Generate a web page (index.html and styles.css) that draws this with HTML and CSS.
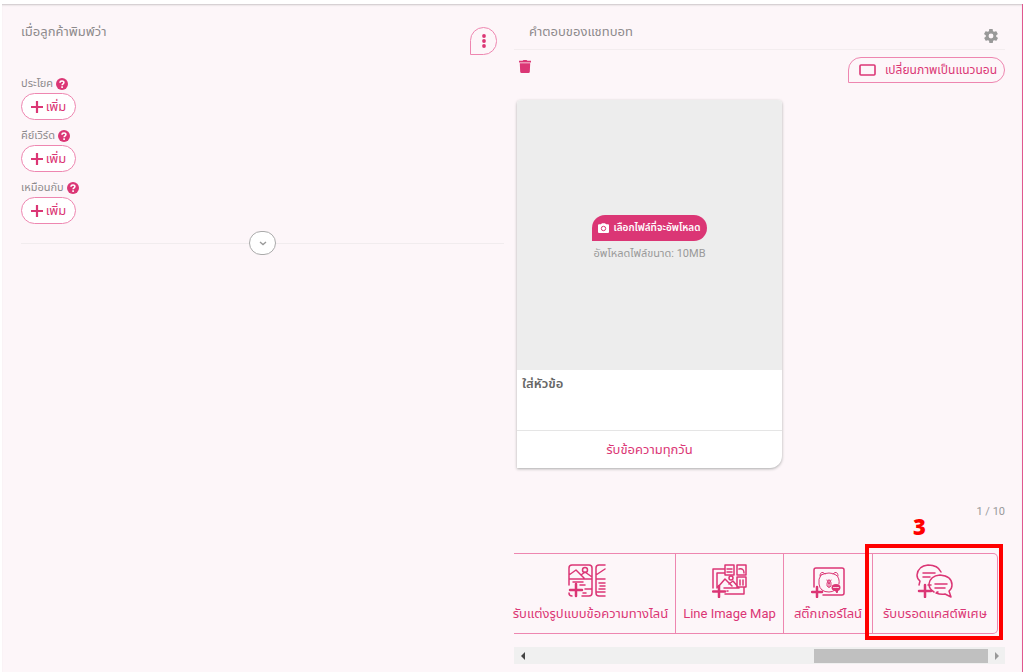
FILE: index.html
```html
<!DOCTYPE html>
<html lang="th">
<head>
<meta charset="utf-8">
<meta name="viewport" content="width=device-width, initial-scale=1">
<title>แชทบอท</title>
<link rel="stylesheet" href="styles.css">
</head>
<body>
<svg class="sprite" aria-hidden="true">
  <symbol id="help" viewBox="0 0 12 12"><circle cx="6" cy="6" r="6" fill="currentColor"/><path d="M4 4.700C4.100 2.500 8 2.500 7.900 4.600 7.900 5.900 6.100 5.700 6.100 7.300M6.100 8.300V9.900" fill="none" stroke="#fff" stroke-width="1.600"/></symbol>
  <symbol id="plus" viewBox="0 0 12 12"><path d="M6 .5V11.500M.5 6H11.500" stroke="currentColor" stroke-width="2.200" stroke-linecap="round"/></symbol>
</svg>
<main class="workspace">
  <section class="rules">
    <header class="rules-head">
      <h2 class="panel-title">เมื่อลูกค้าพิมพ์ว่า</h2>
      <button class="more" aria-label="เมนู"><svg width="4" height="14" viewBox="0 0 4 14" fill="currentColor"><circle cx="2" cy="2" r="1.900"/><circle cx="2" cy="7" r="1.900"/><circle cx="2" cy="12" r="1.900"/></svg></button>
    </header>
    <div class="rule">
      <p class="rule-label">ประโยค <svg class="help"><use href="#help"/></svg></p>
      <button class="add"><svg class="plus"><use href="#plus"/></svg>เพิ่ม</button>
    </div>
    <div class="rule">
      <p class="rule-label">คีย์เวิร์ด <svg class="help"><use href="#help"/></svg></p>
      <button class="add"><svg class="plus"><use href="#plus"/></svg>เพิ่ม</button>
    </div>
    <div class="rule">
      <p class="rule-label">เหมือนกับ <svg class="help"><use href="#help"/></svg></p>
      <button class="add"><svg class="plus"><use href="#plus"/></svg>เพิ่ม</button>
    </div>
    <div class="expander"><button class="expand" aria-label="ขยาย"><svg width="8" height="5" viewBox="0 0 8 5"><path d="M1 1L4 3.600L7 1" fill="none" stroke="currentColor" stroke-width="1.300"/></svg></button></div>
  </section>

  <section class="answers">
    <header class="answers-head">
      <h2 class="panel-title">คำตอบของแชทบอท</h2>
      <button class="plain gear" aria-label="ตั้งค่า"><svg width="14" height="14" viewBox="2 2 20 20" fill="currentColor" fill-rule="evenodd"><path d="M19.400 13c.1-.7.1-1.300 0-2l2.100-1.600c.2-.2.2-.4.1-.6l-2-3.500c-.1-.2-.4-.3-.6-.2l-2.500 1c-.5-.4-1.100-.7-1.700-1l-.4-2.600c0-.3-.2-.5-.5-.5h-4c-.3 0-.5.2-.5.500l-.4 2.600c-.6.300-1.100.6-1.700 1l-2.500-1c-.2-.1-.5 0-.6.200l-2 3.500c-.1.200-.1.500.1.600L4.600 11c-.1.700-.1 1.300 0 2l-2.100 1.600c-.2.200-.2.400-.1.600l2 3.500c.1.200.4.300.6.200l2.500-1c.5.400 1.100.7 1.700 1l.4 2.600c0 .3.200.5.500.5h4c.3 0 .5-.2.500-.5l.4-2.600c.6-.3 1.100-.6 1.700-1l2.500 1c.2.100.5 0 .6-.2l2-3.500c.1-.2.100-.5-.1-.6zM12 15.500a3.500 3.500 0 1 1 0-7 3.500 3.500 0 0 1 0 7z"/></svg></button>
    </header>
    <div class="tools">
      <button class="plain trash" aria-label="ลบ"><svg width="12" height="13" viewBox="0 0 12 13" fill="currentColor"><path d="M0 .8H3.500L4.500 0H7.500L8.500 .8H12V2.400H0zM.8 3.300H11.200L10.800 11.700Q10.700 13 9.500 13H2.500Q1.300 13 1.200 11.700z"/></svg></button>
      <button class="orient"><svg width="17" height="12" viewBox="0 0 17 12"><rect x="1" y="1" width="15" height="10" rx="1" fill="none" stroke="currentColor" stroke-width="1.600"/></svg>เปลี่ยนภาพเป็นแนวนอน</button>
    </div>
    <article class="card">
      <div class="picture">
        <button class="upload"><svg width="11" height="10" viewBox="0 0 11 10"><path d="M1 1.300H3L4 .2H7L8 1.300H10Q11 1.300 11 2.300V9Q11 10 10 10H1Q0 10 0 9V2.300Q0 1.300 1 1.300z" fill="currentColor"/><circle cx="5.500" cy="5.500" r="2.200" fill="none" stroke="#db3675"/></svg>เลือกไฟล์ที่จะอัพโหลด</button>
        <p class="limit">อัพโหลดไฟล์ขนาด: 10MB</p>
      </div>
      <h3 class="card-title">ใส่หัวข้อ</h3>
      <button class="card-action">รับข้อความทุกวัน</button>
    </article>
    <p class="count">1 / 10</p>
    <div class="strip">
      <button class="tile tile-rich">
        <svg width="38" height="34" viewBox="0 0 38 34" class="line"><path d="M1 21V4Q1 1 4 1H21Q24 1 24 4V29Q24 32 21 32H14M1 15H24M1 11L8 6L16 14M13 11L17 8L24 13M5 18H15M12 21H17M17 25H24M15 29H18M1 29Q1 32 4 32M37 1H31Q28 1 28 4V29Q28 32 31 32H37M28 11L37 5M28 15H37M31 19H37M32 22H37M31 25H37M28 28H37"/><circle cx="17" cy="6" r="2.500"/><path class="heavy" d="M8 20V32M2 26H14"/></svg>
        รับแต่งรูปแบบข้อความทางไลน์
      </button>
      <button class="tile">
        <svg width="36" height="34" viewBox="0 0 36 34" class="line"><path d="M12 5H1V24M12 9H5V24M13 1H22V11H13zM25 1H34V11H25zM25 13H34V23H25zM15 5H20M15 8H20M27 5Q32 4 32 9M28 16V21M31 16V21M32 23V30H13M6 23L13 15L20 22M17 20L21 17L27 24H12"/><circle cx="19" cy="14" r="2"/><path d="M15 27H16"/><path class="heavy" d="M7 22V33M1 27.500H13"/></svg>
        Line Image Map
      </button>
      <button class="tile">
        <svg width="34" height="32" viewBox="0 0 34 32" class="line"><path d="M3 21V4Q3 2 5 2H31Q33 2 33 4V27Q33 29 31 29H12"/><g stroke-width="1"><path d="M10 9Q7 13 8 18Q9 26 18 26Q22 26 24 24M28 18Q29 12 25 9Q22 7 18 7Q14 7 10 9M9 10Q9 6 12 6.500L14 8M27 10Q27 6 24 6.500L22 8M18 14Q15 17 16 20Q18 23 20 20Q21 16 18 14zM16 14L18 18L20 14M18 17V21"/></g><ellipse cx="25" cy="21.500" rx="4.500" ry="3.500" fill="currentColor" stroke="none"/><path d="M24 24L26 27L27 24" fill="currentColor" stroke-width="1"/><path d="M22.500 21.500H27.500" stroke="#fff5f9" stroke-width=".8" stroke-dasharray="1 .6"/><path class="heavy" d="M6 21V31M1 26H11"/></svg>
        สติ๊กเกอร์ไลน์
      </button>
      <button class="tile">
        <svg width="38" height="34" viewBox="0 0 38 34" class="line"><path d="M3 21L4 17Q1 15 1 11Q2 2 12 1Q22 1 25 8M15 21H12M7 9H19M7 13H14M18 28Q13 25 13 20Q14 12 24 11Q36 12 36 21Q36 25 33 27L35 33L29 30Q25 31 20 29M19 20H31M19 24H29M21 28H22"/><path class="heavy" d="M9 21V33M3 27H15"/></svg>
        รับบรอดแคสต์พิเศษ
      </button>
      <div class="highlight"><span class="step">3</span></div>
    </div>
    <div class="scroller">
      <button class="plain arrow" aria-label="เลื่อนซ้าย"><svg width="4" height="8" viewBox="0 0 4 8"><path d="M4 0V8L0 4z" fill="#444"/></svg></button>
      <div class="track"><div class="thumb"></div></div>
      <button class="plain arrow" aria-label="เลื่อนขวา"><svg width="4" height="8" viewBox="0 0 4 8"><path d="M0 0V8L4 4z" fill="#999"/></svg></button>
    </div>
  </section>
</main>
</body>
</html>
```
FILE: styles.css
```css
* { box-sizing: border-box; }
body {
  margin: 0;
  padding: 4px 1px 0 2px;
  background: #fff;
  color: #8d8a8c;
  font: 12px/18px Roboto, "Noto Sans Thai", sans-serif;
}
h2, h3, p { margin: 0; }
button { font: inherit; color: #db3675; background: none; border: 1px solid #ee86b0; padding: 0; white-space: nowrap; }
button svg { flex: none; }
.sprite { display: none; }
.plain { border: 0; display: flex; }

.workspace {
  display: grid;
  grid-template-columns: minmax(0, 483fr) minmax(0, 491fr);
  gap: 10px;
  min-height: calc(100vh - 4px);
  padding: 0 17px 0 19px;
  background: #fdf6f9;
  border-right: 1px solid #e0588f;
  box-shadow: inset 0 2px 2px -1px #c9c4c6;
}
.panel-title { font-size: 13px; line-height: 18px; font-weight: 400; }

.rules-head { display: flex; justify-content: space-between; align-items: flex-start; height: 71px; padding: 19px 7px 0 0; }
.more { display: flex; align-items: center; justify-content: center; width: 27px; height: 28px; margin-top: 4px; border-radius: 14px 14px 14px 0; }
.rule { height: 52px; }
.rule-label { display: flex; align-items: center; gap: 3px; height: 18px; font-size: 11px; }
.help { width: 12px; height: 12px; color: #db3675; }
.plus { width: 12px; height: 12px; }
.add { display: flex; align-items: center; justify-content: center; gap: 3px; width: 55px; height: 27px; border-radius: 14px; background: #fff; font-size: 13px; }
.expander { display: flex; align-items: center; height: 24px; }
.expander::before, .expander::after { content: ""; flex: 1; height: 1px; background: #f1ecee; }
.expand { display: flex; align-items: center; justify-content: center; width: 27px; height: 24px; border-color: #aaa; border-radius: 12px; background: #fff; color: #999; }

.answers-head { display: flex; justify-content: space-between; height: 46px; padding: 19px 7px 0 15px; border-bottom: 1px solid #f3edef; }
.gear { align-self: flex-start; margin-top: 6px; color: #999; }
.tools { display: flex; justify-content: space-between; align-items: flex-start; height: 50px; padding: 7px 0 0 5px; }
.trash { margin-top: 3px; }
.orient { display: flex; align-items: center; justify-content: space-between; width: 157px; height: 26px; padding: 0 7px 0 10px; border-radius: 13px 13px 13px 0; }
.card { width: 265px; margin-left: 3px; border-radius: 4px 4px 12px 0; background: #fff; box-shadow: 0 1px 3px #aaa; overflow: hidden; }
.picture { display: flex; flex-direction: column; align-items: center; height: 270px; padding-top: 115px; background: #ededed; }
.upload { display: flex; align-items: center; justify-content: center; gap: 4px; width: 115px; height: 26px; border: 0; border-radius: 13px 13px 13px 0; background: #db3675; color: #fff; font-size: 10px; font-weight: 600; }
.limit { margin-top: 4px; color: #999; font-size: 11px; }
.card-title { height: 60px; padding: 5px; color: #666; font-size: 13px; line-height: 18px; font-weight: 600; }
.card-action { width: 100%; height: 38px; border: 0; border-top: 1px solid #e5e5e5; font-size: 13px; }
.count { margin-top: 35px; text-align: right; color: #999; font-size: 11px; }

.strip {
  position: relative;
  display: grid;
  grid-template-columns: minmax(0, 162fr) minmax(0, 108fr) minmax(0, 89fr) minmax(0, 124fr);
  height: 81px;
  margin: 32px 7px 0 0;
  border: solid #ee86b0;
  border-width: 1px 1px 1px 0;
  border-radius: 0 5px 5px 0;
}
.tile { display: flex; flex-direction: column; align-items: center; justify-content: flex-end; gap: 7px; padding-bottom: 10px; border-width: 0 1px 0 0; font-size: 13px; line-height: 18px; }
.tile:nth-of-type(4) { border: 0; }
.tile-rich { padding-right: 8px; }
.tile-rich svg { margin-right: 8px; }
.line { fill: none; stroke: currentColor; stroke-width: 1.500; stroke-linecap: round; stroke-linejoin: round; }
.heavy { stroke-width: 2.500; }
.highlight { position: absolute; top: -10px; right: -6px; width: 138px; height: 96px; border: 4px solid #f00; pointer-events: none; }
.step { position: absolute; top: -37px; left: 44px; color: #f00; font: 800 22px/30px "Open Sans", sans-serif; }

.scroller { display: flex; align-items: center; height: 17px; margin-top: 13px; background: #f0f0f0; }
.arrow { align-items: center; justify-content: center; width: 17px; height: 17px; }
.track { flex: 1; display: flex; justify-content: flex-end; }
.thumb { width: 38%; height: 14px; background: #c0c0c0; }
```
